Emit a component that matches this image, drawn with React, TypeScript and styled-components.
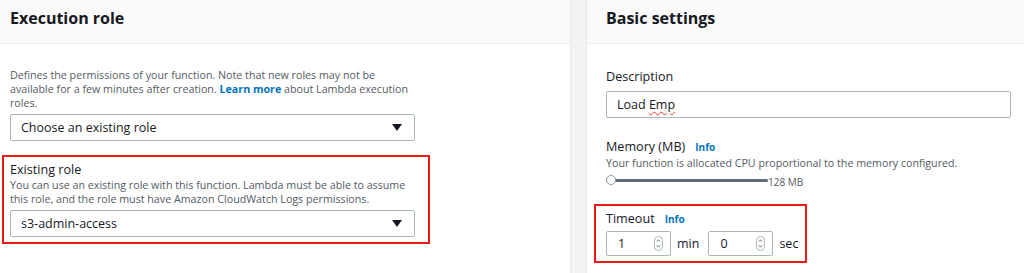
import React from "react";
import styled, { createGlobalStyle } from "styled-components";

const GlobalStyle = createGlobalStyle`
  html, body {
    margin: 0;
    padding: 0;
    background: #ffffff;
  }
  body {
    font-family: "Open Sans", "Liberation Sans", Arial, sans-serif;
    color: #16191f;
  }
`;

const Page = styled.div`
  display: flex;
  width: 1024px;
  height: 273px;
  overflow: hidden;
  background: #ffffff;
`;

const Panel = styled.section<{ $width?: number }>`
  display: flex;
  flex-direction: column;
  width: ${(p) => (p.$width ? `${p.$width}px` : "auto")};
  flex: ${(p) => (p.$width ? "none" : "1")};
  background: #ffffff;
`;

const Gutter = styled.div`
  width: 15px;
  flex: none;
  background: #f2f3f3;
  border-left: 1px solid #e6e8e8;
  border-right: 1px solid #e6e8e8;
`;

const PanelHeader = styled.header<{ $pad: number }>`
  height: 44px;
  box-sizing: border-box;
  padding: 6px 0 0 ${(p) => p.$pad}px;
  background: #fafafa;
  border-bottom: 1px solid #eaeded;
  font-size: 16px;
  line-height: 24px;
  font-weight: 700;
`;

const PanelBody = styled.div<{ $pad: number; $top: number }>`
  display: flex;
  flex-direction: column;
  padding: ${(p) => p.$top}px 0 0 ${(p) => p.$pad}px;
`;

const Hint = styled.p<{ $width?: number }>`
  margin: 0;
  font-size: 10.7px;
  line-height: 14px;
  color: #545b64;
  width: ${(p) => p.$width ?? 402}px;
`;

const Link = styled.a`
  color: #0073bb;
  font-weight: 700;
  text-decoration: none;
`;

const Select = styled.div<{ $mt: number }>`
  margin-top: ${(p) => p.$mt}px;
  width: 405px;
  height: 27px;
  box-sizing: border-box;
  display: flex;
  align-items: center;
  justify-content: space-between;
  padding: 0 12px 0 10px;
  border: 1px solid #aab7b8;
  border-radius: 2px;
  font-size: 12.5px;
  color: #16191f;
`;

const Caret = styled.span`
  width: 0;
  height: 0;
  border-left: 5px solid transparent;
  border-right: 5px solid transparent;
  border-top: 7px solid #16191f;
`;

const Highlight = styled.div<{ $mt: number; $ml: number; $width: number }>`
  margin-top: ${(p) => p.$mt}px;
  margin-left: -${(p) => p.$ml}px;
  width: ${(p) => p.$width}px;
  box-sizing: border-box;
  border: 2px solid #f01616;
  padding: 4px 0 5px ${(p) => p.$ml - 2}px;
`;

const Label = styled.div`
  display: flex;
  align-items: baseline;
  gap: 10px;
  font-size: 12.6px;
  line-height: 17px;
  color: #16191f;
`;

const InfoLink = styled.a`
  color: #0073bb;
  font-weight: 700;
  font-size: 10px;
  text-decoration: none;
`;

const TextInput = styled.div`
  margin-top: 6px;
  width: 405px;
  height: 27px;
  box-sizing: border-box;
  display: flex;
  align-items: center;
  padding-left: 10px;
  border: 1px solid #aab7b8;
  border-radius: 2px;
  font-size: 12.5px;
`;

const Misspelled = styled.span`
  text-decoration: underline wavy #e0352b;
  text-decoration-thickness: 1px;
  text-underline-offset: 2px;
`;

const Field = styled.div<{ $mt: number }>`
  margin-top: ${(p) => p.$mt}px;
`;

const SliderRow = styled.div`
  display: flex;
  align-items: flex-end;
  margin-top: 2px;
  height: 16px;
`;

const Track = styled.div`
  position: relative;
  width: 162px;
  height: 3px;
  margin-bottom: 6px;
  background: #5f6b7a;
  border-radius: 2px;
`;

const Thumb = styled.span`
  position: absolute;
  left: 0;
  top: -4px;
  width: 10px;
  height: 10px;
  box-sizing: border-box;
  border-radius: 50%;
  background: #ffffff;
  border: 1px solid #879596;
`;

const SliderValue = styled.span`
  font-size: 10px;
  color: #545b64;
  line-height: 12px;
`;

const NumberRow = styled.div`
  display: flex;
  align-items: center;
  gap: 6px;
  margin-top: 3px;
`;

const NumberBox = styled.div`
  width: 65px;
  height: 25px;
  box-sizing: border-box;
  display: flex;
  align-items: center;
  justify-content: space-between;
  padding: 0 7px 0 11px;
  border: 1px solid #aab7b8;
  border-radius: 2px;
  font-size: 12.5px;
`;

const Unit = styled.span`
  font-size: 12.5px;
  margin-right: 3px;
`;

const Spinner = () => (
  <svg width="9" height="15" viewBox="0 0 9 15" fill="none">
    <rect x="0.5" y="0.5" width="8" height="14" rx="4" stroke="#aab7b8" />
    <path d="M2.8 5.6 L4.5 3.8 L6.2 5.6" stroke="#545b64" strokeWidth="0.9" />
    <path d="M2.8 9.4 L4.5 11.2 L6.2 9.4" stroke="#545b64" strokeWidth="0.9" />
  </svg>
);

const App: React.FC = () => {
  return (
    <>
      <GlobalStyle />
      <Page>
        <Panel $width={570}>
          <PanelHeader $pad={10}>Execution role</PanelHeader>
          <PanelBody $pad={10} $top={24}>
            <Hint>
              Defines the permissions of your function. Note that new roles may not be available for a few
              minutes after creation. <Link>Learn more</Link> about Lambda execution roles.
            </Hint>
            <Select $mt={4}>
              Choose an existing role
              <Caret />
            </Select>
            <Highlight $mt={14} $ml={8} $width={428}>
              <Label>Existing role</Label>
              <Hint>
                You can use an existing role with this function. Lambda must be able to assume this role, and
                the role must have Amazon CloudWatch Logs permissions.
              </Hint>
              <Select $mt={4}>
                s3-admin-access
                <Caret />
              </Select>
            </Highlight>
          </PanelBody>
        </Panel>
        <Gutter />
        <Panel>
          <PanelHeader $pad={19}>Basic settings</PanelHeader>
          <PanelBody $pad={19} $top={24}>
            <Label>Description</Label>
            <TextInput>
              Load&nbsp;<Misspelled>Emp</Misspelled>
            </TextInput>
            <Field $mt={20}>
              <Label>
                Memory (MB) <InfoLink>Info</InfoLink>
              </Label>
              <Hint $width={420}>Your function is allocated CPU proportional to the memory configured.</Hint>
              <SliderRow>
                <Track>
                  <Thumb />
                </Track>
                <SliderValue>128 MB</SliderValue>
              </SliderRow>
            </Field>
            <Highlight $mt={16} $ml={12} $width={213}>
              <Label>
                Timeout <InfoLink>Info</InfoLink>
              </Label>
              <NumberRow>
                <NumberBox>
                  1
                  <Spinner />
                </NumberBox>
                <Unit>min</Unit>
                <NumberBox>
                  0
                  <Spinner />
                </NumberBox>
                <Unit>sec</Unit>
              </NumberRow>
            </Highlight>
          </PanelBody>
        </Panel>
      </Page>
    </>
  );
};

export default App;
